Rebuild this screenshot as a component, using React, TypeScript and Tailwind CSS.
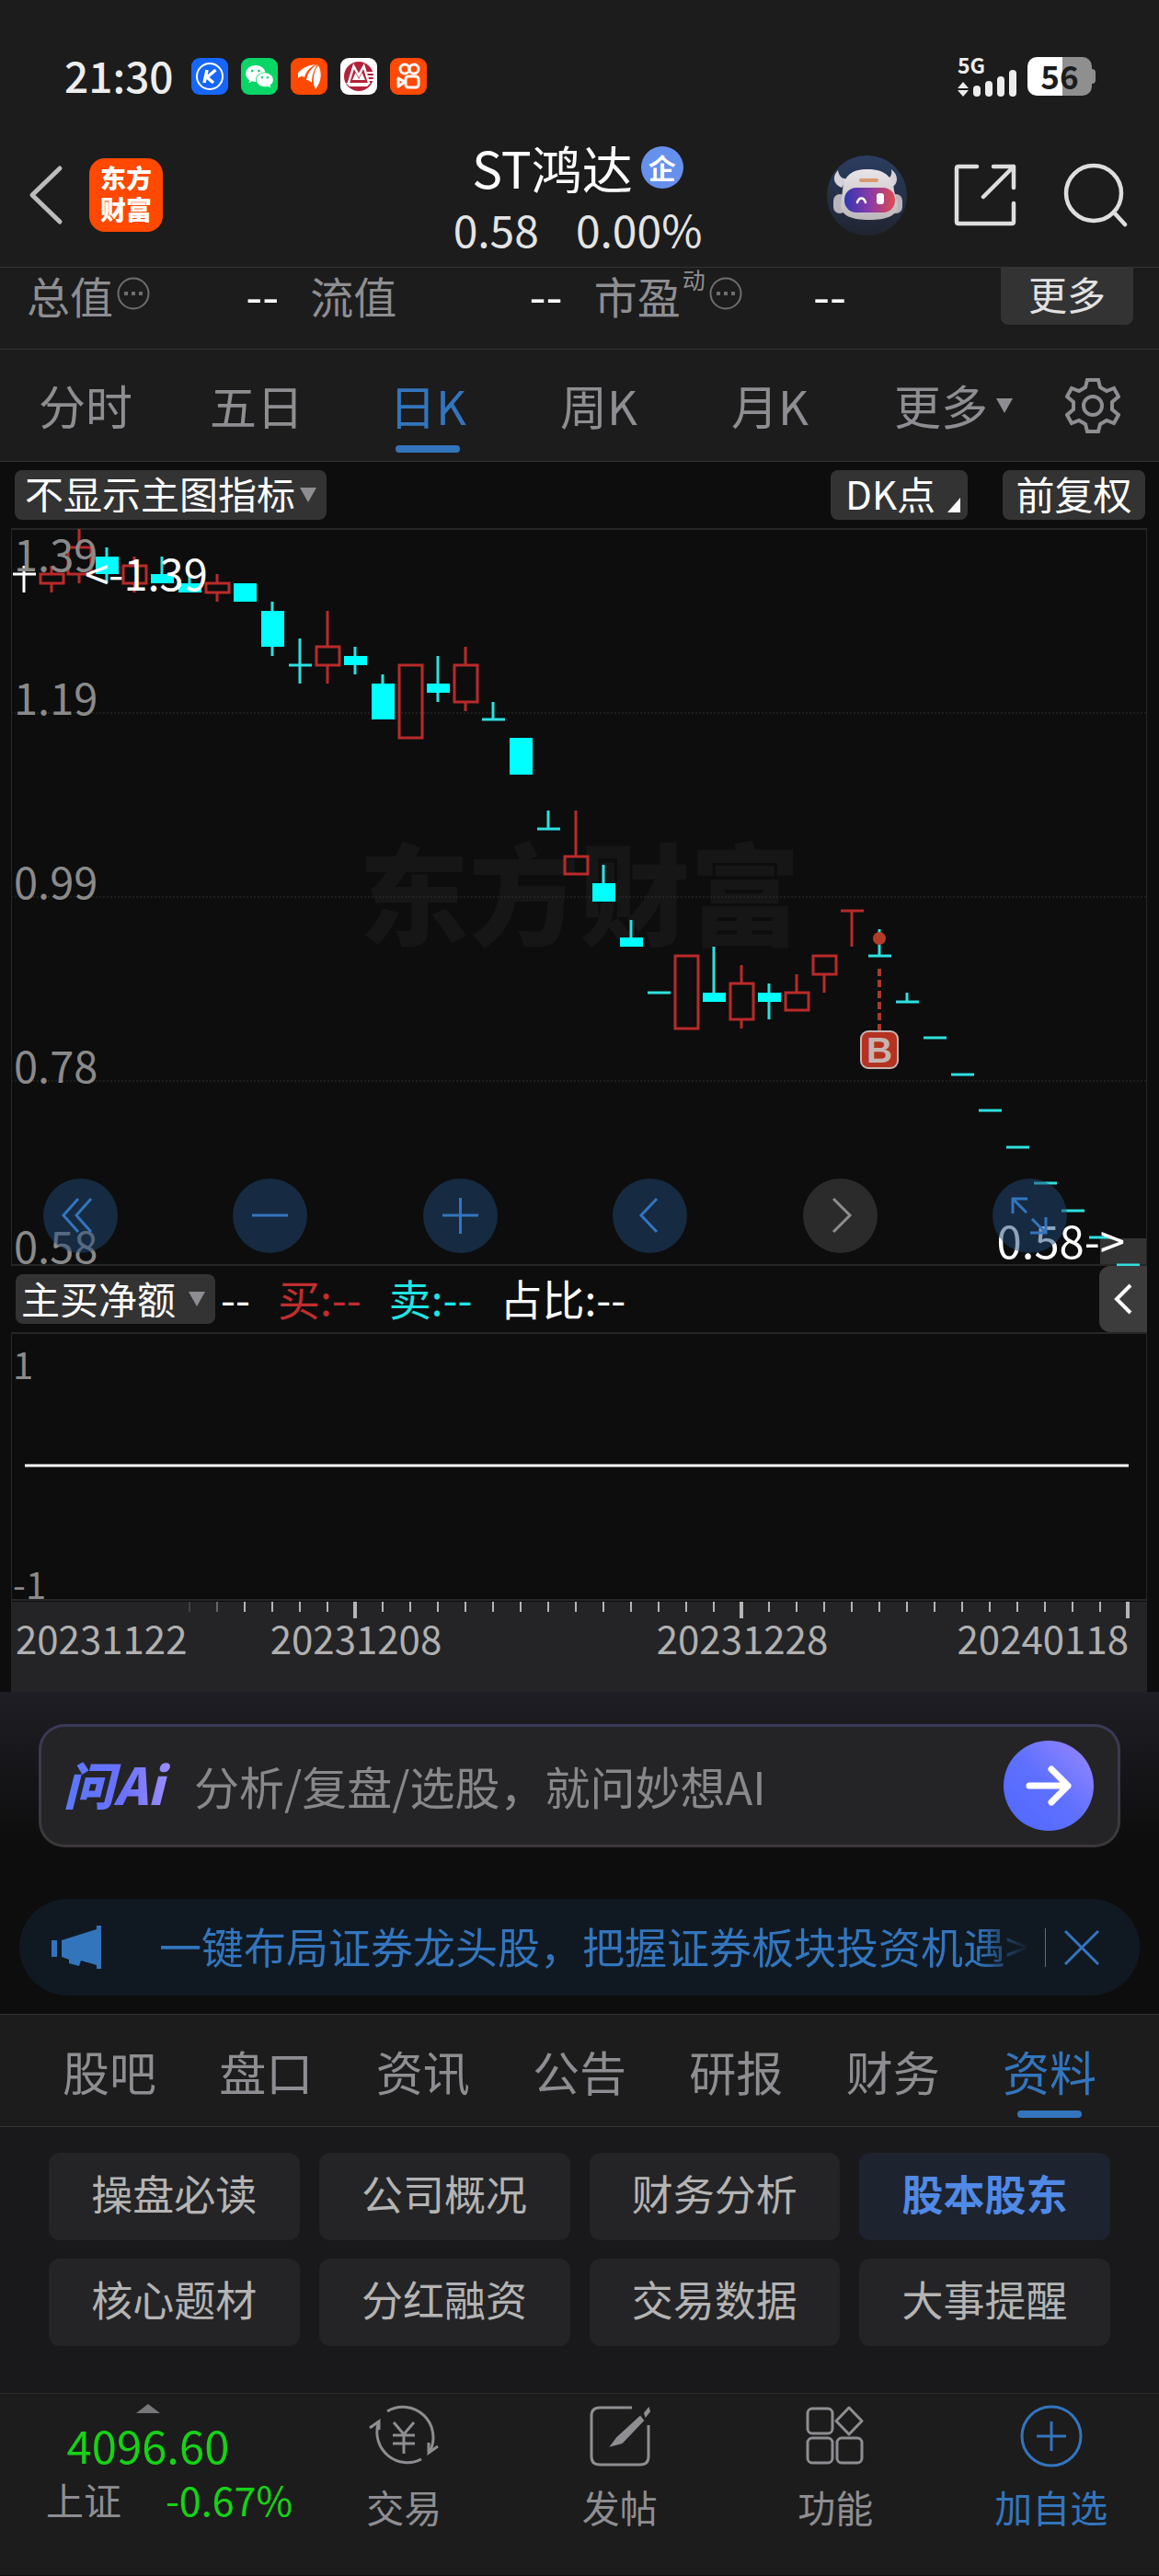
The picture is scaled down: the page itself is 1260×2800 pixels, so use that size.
import React from "react";
import { AiFillWechat } from "react-icons/ai";

type Kind = "up" | "down" | "flat";
/* Each candle: kind, high, body top, body bottom, low; in cents below the 1.39 peak. */
type Candle = [Kind, number, number, number, number];

const candles: Candle[] = [
  ["flat", 4, 5, 5, 7],
  ["up", 4, 5, 6, 7],
  ["up", 0, 2, 5, 6],
  ["down", 2, 3, 5, 6],
  ["up", 3, 4, 6, 7],
  ["down", 3, 5, 6, 6],
  ["down", 5, 6, 7, 7],
  ["up", 5, 6, 7, 8],
  ["down", 6, 6, 8, 8],
  ["down", 8, 9, 13, 14],
  ["down", 12, 15, 15, 17],
  ["up", 9, 13, 15, 17],
  ["down", 13, 14, 15, 16],
  ["down", 16, 17, 21, 21],
  ["up", 15, 15, 23, 23],
  ["down", 14, 17, 18, 19],
  ["up", 13, 15, 19, 20],
  ["down", 19, 21, 21, 21],
  ["down", 23, 23, 27, 27],
  ["down", 31, 33, 33, 33],
  ["up", 31, 36, 38, 38],
  ["down", 37, 39, 41, 41],
  ["down", 43, 45, 46, 46],
  ["down", 51, 51, 51, 51],
  ["up", 47, 47, 55, 55],
  ["down", 46, 51, 52, 52],
  ["up", 48, 50, 54, 55],
  ["down", 50, 51, 52, 54],
  ["up", 49, 51, 53, 53],
  ["up", 47, 47, 49, 51],
  ["up", 42, 42, 42, 46],
  ["down", 44, 47, 47, 47],
  ["down", 51, 52, 52, 52],
  ["down", 56, 56, 56, 56],
  ["down", 60, 60, 60, 60],
  ["down", 64, 64, 64, 64],
  ["down", 68, 68, 68, 68],
  ["down", 72, 72, 72, 72],
  ["down", 75, 75, 75, 75],
  ["down", 78, 78, 78, 78],
  ["down", 81, 81, 81, 81],
];

const PLOT_H = 800;
const yOf = (n: number) => Math.round((n * PLOT_H) / 81);
const xOf = (i: number) => 14 + i * 30;

function CandleMark({ c, i }: { c: Candle; i: number }) {
  const [kind, hi, top, bottom, lo] = c;
  const x = xOf(i);
  const line = kind === "up" ? "#b92a2a" : kind === "down" ? "#2fe0e0" : "#ffffff";
  const flat = top === bottom;
  return (
    <g stroke={line} strokeWidth="3" fill="none">
      {hi < top && <line x1={x} x2={x} y1={yOf(hi)} y2={yOf(top)} />}
      {lo > bottom && <line x1={x} x2={x} y1={yOf(bottom)} y2={yOf(lo)} />}
      {flat && <line x1={x - 12} x2={x + 13} y1={yOf(top)} y2={yOf(top)} />}
      {!flat && kind === "up" && (
        <rect x={x - 12} y={yOf(top)} width="25" height={yOf(bottom) - yOf(top)} />
      )}
      {!flat && kind === "down" && (
        <rect x={x - 12} y={yOf(top)} width="25" height={yOf(bottom) - yOf(top)} fill="#00ffff" stroke="none" />
      )}
    </g>
  );
}

function MainChart() {
  return (
    <svg viewBox="0 0 1235 802" className="block h-auto w-full" role="img" aria-label="日K线图">
      <text x="618" y="445" textAnchor="middle" fontSize="120" fontWeight="900" fill="#161616">东方财富</text>
      <g stroke="#303030" strokeDasharray="2 2">
        <line x1="0" x2="1235" y1="201" y2="201" />
        <line x1="0" x2="1235" y1="401" y2="401" />
        <line x1="0" x2="1235" y1="601" y2="601" />
      </g>
      <rect x="1184" y="772" width="51" height="28" fill="#333333" />
      <path d="M0 1H1235M0 801H1235" stroke="#262626" strokeWidth="2" />
      <path d="M0.5 0V802M1234.5 0V802" stroke="#262626" />
      <g transform="translate(0 1)">
        {candles.map((c, i) => (
          <CandleMark key={i} c={c} i={i} />
        ))}
      </g>
      <g fontSize="47" fill="#8a8a8a">
        <text x="3" y="47">1.39</text>
        <text x="3" y="203">1.19</text>
        <text x="3" y="403">0.99</text>
        <text x="3" y="603">0.78</text>
        <text x="3" y="799">0.58</text>
      </g>
      <text x="80" y="68" fontSize="47" fill="#ffffff">&lt;-1.39</text>
      <text x="1211" y="794" fontSize="49" fill="#ffffff" textAnchor="end">0.58-&gt;</text>
      <circle cx="944" cy="446" r="7" fill="#b43a28" />
      <line x1="944" x2="944" y1="479" y2="546" stroke="#a63c2c" strokeWidth="4" strokeDasharray="8 4" />
      <rect x="924" y="547" width="40" height="40" rx="8" fill="#b53220" stroke="#c6b4b1" strokeWidth="2" />
      <text x="944" y="581" textAnchor="middle" fontSize="39" fontWeight="700" fill="#c6b4b1" fontFamily="Liberation Sans, sans-serif">B</text>
    </svg>
  );
}

const controls: { label: string; d: string; off?: boolean }[] = [
  { label: "最早", d: "M38 22L22 40L38 58M52 22L36 40L52 58" },
  { label: "缩小", d: "M21 40H60" },
  { label: "放大", d: "M21 40H60M40.500 21V60" },
  { label: "向左", d: "M48 22L31 40L48 58" },
  { label: "向右", d: "M33 22L51 40L33 58", off: true },
  { label: "全屏", d: "M22 38V22H38M22 22L37 37M43 44L58 59M41 59H58V42" },
];

function Controls() {
  return (
    <div className="absolute bottom-[14px] left-[35px] right-[87px] flex justify-between">
      {controls.map((c) => (
        <button
          key={c.label}
          aria-label={c.label}
          className={
            c.off
              ? "h-[81px] w-[81px] rounded-full bg-[#2b2b2b] text-[#8e8e92]"
              : "h-[81px] w-[81px] rounded-full bg-[#1f4775]/50 text-[#3375bd]"
          }
        >
          <svg viewBox="0 0 81 81" className="h-full w-full" fill="none" stroke="currentColor" strokeWidth="3">
            <path d={c.d} />
          </svg>
        </button>
      ))}
    </div>
  );
}

function SubChart() {
  return (
    <svg viewBox="0 0 1235 293" className="block h-auto w-full" role="img" aria-label="主买净额图">
      <path d="M0 1H1235M0 291H1235" stroke="#262626" strokeWidth="2" />
      <path d="M0.5 0V293M1234.5 0V293" stroke="#262626" />
      <g fontSize="40" fill="#8a8a8a">
        <text x="2" y="51">1</text>
        <text x="2" y="290">-1</text>
      </g>
      <line x1="15" x2="1215" y1="145" y2="145" stroke="#ffffff" strokeWidth="3" />
    </svg>
  );
}

function TimeAxis() {
  const ticks = Array.from({ length: 35 }, (_, k) => k + 6);
  return (
    <svg viewBox="0 0 1235 98" className="block h-auto w-full bg-[#242426]" role="img" aria-label="日期轴">
      {ticks.map((i) => {
        const major = i === 12 || i === 26 || i === 40;
        return (
          <line
            key={i}
            x1={xOf(i)}
            x2={xOf(i)}
            y1="0"
            y2={major ? 18 : 11}
            stroke="#b5b5b5"
            strokeWidth={major ? 4 : 2}
            opacity={i === 6 ? 0.2 : i === 7 ? 0.45 : 1}
          />
        );
      })}
      <g fontSize="42" fill="#b0b0b0">
        <text x="5" y="57">20231122</text>
        <text x="375" y="57" textAnchor="middle">20231208</text>
        <text x="795" y="57" textAnchor="middle">20231228</text>
        <text x="1215" y="57" textAnchor="end">20240118</text>
      </g>
    </svg>
  );
}

function StatusBar() {
  return (
    <div className="flex h-[148px] items-center justify-between pl-[70px] pr-[69px] pt-[18px]">
      <div className="flex items-center">
        <span className="w-[138px] pb-1 text-[46px] font-medium leading-none text-[#ededed]">21:30</span>
        <div className="flex gap-[14px]">
          <svg viewBox="0 0 40 40" className="h-10 w-10">
            <rect width="40" height="40" rx="9" fill="#1766fb" />
            <circle cx="20" cy="20" r="14" fill="none" stroke="#fff" strokeWidth="2" />
            <path d="M17 13L14 27M26.500 13L17 21L24 27" fill="none" stroke="#fff" strokeWidth="3.500" />
          </svg>
          <span className="flex h-10 w-10 items-center justify-center rounded-[9px] bg-[#09d667] text-[34px] text-white">
            <AiFillWechat />
          </span>
          <svg viewBox="0 0 40 40" className="h-10 w-10">
            <rect width="40" height="40" rx="9" fill="#ff4800" />
            <path d="M8 16C14 10 19 8 27 7C20 11 17 15 15 21C12 19 10 20 8 22Z" fill="#fff" />
            <path d="M17 24C18 17 22 11 29 7C25 14 23 19 23 27C21 25 19 24 17 24Z" fill="#fff" />
            <path d="M25 29C24 20 26 13 30 8C34 15 34 25 27 34Z" fill="#fff" />
          </svg>
          <svg viewBox="0 0 40 40" className="h-10 w-10">
            <rect width="40" height="40" rx="9" fill="#fff" />
            <circle cx="20" cy="20" r="16" fill="#b3213a" />
            <path d="M9 27L14.500 9L20 19L25.500 9L31 27" fill="none" stroke="#fff" strokeWidth="2.500" />
            <path d="M13 24L16.500 16L20 23L23.500 16L27 24Z" fill="#fff" />
            <path d="M6 27H33L29 31H10Z" fill="#fff" />
            <path d="M29 16H38M30 20H38M31 24H38" stroke="#fff" strokeWidth="2" />
          </svg>
          <svg viewBox="0 0 40 40" className="h-10 w-10">
            <rect width="40" height="40" rx="9" fill="#ff4906" />
            <g fill="none" stroke="#fff" strokeWidth="3">
              <circle cx="16" cy="12" r="5" />
              <circle cx="26" cy="12" r="5" />
              <rect x="17" y="20" width="14" height="12" rx="3" />
              <path d="M16 26L9 22V31Z" strokeLinejoin="round" />
            </g>
          </svg>
        </div>
      </div>
      <div className="flex items-center gap-3">
        <div className="flex h-[44px] items-end gap-[5px]">
          <div className="relative h-4 w-3">
            <span className="absolute bottom-[18px] left-0 text-[23px] font-bold leading-[34px] text-[#ededed]">5G</span>
            <svg viewBox="0 0 12 16" className="h-4 w-3" fill="#ededed">
              <path d="M6 0L12 7H0ZM6 16L12 9H0Z" />
            </svg>
          </div>
          <span className="h-3 w-2 rounded-sm bg-[#ededed]" />
          <span className="h-[17px] w-2 rounded-sm bg-[#ededed]" />
          <span className="h-[22px] w-2 rounded-sm bg-[#ededed]" />
          <span className="h-[29px] w-2 rounded-sm bg-[#ededed]" />
        </div>
        <div className="flex items-center">
          <span className="flex h-[42px] w-[70px] items-center justify-center rounded-[10px] bg-[linear-gradient(90deg,#ffffff_55%,#8f8f8f_55%)] pb-1 text-[35px] font-bold leading-none text-[#1c1c1c]">
            56
          </span>
          <span className="h-4 w-1 rounded-r bg-[#8f8f8f]" />
        </div>
      </div>
    </div>
  );
}

function Robot() {
  return (
    <svg viewBox="0 0 87 87" className="h-[87px] w-[87px]">
      <defs>
        <linearGradient id="halo" x1="0" y1="0" x2="0" y2="1">
          <stop offset="0" stopColor="#2b3d60" />
          <stop offset="1" stopColor="#202430" />
        </linearGradient>
        <linearGradient id="visor" x1="0" y1="0" x2="1" y2="0">
          <stop offset="0" stopColor="#2f37b0" />
          <stop offset="0.5" stopColor="#8a3aa8" />
          <stop offset="1" stopColor="#e04a50" />
        </linearGradient>
        <linearGradient id="helmet" x1="0" y1="0" x2="0" y2="1">
          <stop offset="0" stopColor="#e8e4e8" />
          <stop offset="1" stopColor="#bdb6ba" />
        </linearGradient>
      </defs>
      <circle cx="43.500" cy="43.500" r="43.500" fill="url(#halo)" />
      <path d="M12 16C6 22 6 31 16 35L22 25C16 26 13 22 12 16ZM70 15C78 21 78 31 70 35L63 25C69 26 71 21 70 15Z" fill="#d5d1d8" />
      <rect x="7" y="42" width="14" height="21" rx="7" fill="#b9b4bc" />
      <rect x="68" y="42" width="14" height="21" rx="7" fill="#b9b4bc" />
      <path d="M17 38C18 22 27 15 44 15C61 15 72 22 73 38L77 54C77 66 64 70 46 70C28 70 15 66 15 54Z" fill="url(#helmet)" />
      <rect x="35" y="25" width="21" height="4" rx="2" fill="#d99a6c" />
      <rect x="19" y="35" width="55" height="27" rx="13" fill="url(#visor)" />
      <path d="M33 51C35 45 40 45 42 51" fill="none" stroke="#fff" strokeWidth="2.500" strokeLinecap="round" />
      <rect x="54" y="41" width="8" height="12" rx="3" fill="#fff" />
    </svg>
  );
}

function Header() {
  return (
    <header className="grid h-[142px] grid-cols-[1fr_auto_1fr] items-center pb-2 pl-[30px] pr-[34px]">
      <div className="flex items-center gap-[27px] pb-1.5">
        <button aria-label="返回" className="text-[#bcbcbc]">
          <svg viewBox="0 0 40 68" className="h-[68px] w-10" fill="none" stroke="currentColor" strokeWidth="5" strokeLinecap="round" strokeLinejoin="round">
            <path d="M35 5L5 34L35 63" />
          </svg>
        </button>
        <div className="flex h-20 w-20 flex-col items-center justify-center rounded-[17px] bg-[#ff4800] pb-1 text-[28px] font-black leading-[34px] text-white">
          <span>东方</span>
          <span>财富</span>
        </div>
      </div>
      <div className="text-center text-[48px] leading-[67px] text-[#e4e4e4]">
        <h1 className="flex items-center justify-center gap-[9px] text-[55px] text-white">
          ST鸿达
          <span className="flex h-[46px] w-[46px] items-center justify-center rounded-full bg-[#6590ec] pb-0.5 text-[30px] font-bold leading-none">企</span>
        </h1>
        <p className="flex justify-center gap-10">
          <span>0.58</span>
          <span>0.00%</span>
        </p>
      </div>
      <div className="flex items-center justify-end gap-[51px] pb-1.5 text-[#dedede]">
        <button aria-label="智能助手">
          <Robot />
        </button>
        <button aria-label="分享">
          <svg viewBox="0 0 68 68" className="h-[68px] w-[68px]" fill="none" stroke="currentColor" strokeWidth="4.500" strokeLinecap="round" strokeLinejoin="round">
            <path d="M25 3H5Q3 3 3 5V63Q3 65 5 65H63Q65 65 65 63V43M43 3H65V26M65 3L32 36" />
          </svg>
        </button>
        <button aria-label="搜索">
          <svg viewBox="0 0 70 70" className="h-[70px] w-[70px]" fill="none" stroke="currentColor" strokeWidth="4.500" strokeLinecap="round">
            <circle cx="33" cy="33" r="30" />
            <path d="M56 55L67 67" />
          </svg>
        </button>
      </div>
    </header>
  );
}

function Info() {
  return (
    <svg viewBox="0 0 36 36" className="mb-0.5 h-9 w-9" fill="none" stroke="#6e6e70" strokeWidth="2">
      <circle cx="18" cy="18" r="16.500" />
      <path d="M8 18H12M16 18H20M24 18H28" strokeWidth="4" />
    </svg>
  );
}

function Stats() {
  const stats = [
    { name: "总值", info: true },
    { name: "流值" },
    { name: "市盈", sup: "动", info: true },
  ];
  return (
    <section className="flex h-[90px] items-start justify-between border-y border-[#333333] pl-[29px] pr-7">
      <dl className="grid grow grid-cols-3 gap-[34px] pr-[168px] text-[47px] leading-none">
        {stats.map((s) => (
          <div key={s.name} className="flex h-[58px] items-center justify-between">
            <dt className="flex h-full items-center gap-1 text-[#8e8e92]">
              {s.name}
              {s.sup && <span className="-ml-0.5 self-start text-[25px] leading-none">{s.sup}</span>}
              {s.info && <Info />}
            </dt>
            <dd className="text-[52px] text-white">--</dd>
          </div>
        ))}
      </dl>
      <button className="flex h-[62px] w-36 items-center justify-center rounded-b-lg bg-[#333333] pb-1.5 text-[42px] leading-none text-[#e2e2e2]">更多</button>
    </section>
  );
}

function PeriodTabs() {
  const base = "relative flex h-full items-center justify-center text-[51px] leading-none";
  return (
    <nav className="flex h-[122px] items-center border-b border-[#333333] pr-[42px] text-[#8e8e92]">
      <div className="grid h-full grow grid-cols-6 pr-[42px]">
        <button className={base}>分时</button>
        <button className={base}>五日</button>
        <button className={base + " text-[#3375bd]"}>
          日K
          <span className="absolute bottom-[9px] h-2 w-[70px] rounded-full bg-[#3375bd]" />
        </button>
        <button className={base}>周K</button>
        <button className={base}>月K</button>
        <button className={base}>
          更多
          <svg viewBox="0 0 18 16" className="absolute right-[15px] h-4 w-[18px]" fill="currentColor">
            <path d="M0 0H18L9 16Z" />
          </svg>
        </button>
      </div>
      <button aria-label="设置">
        <svg viewBox="0 0 60 60" className="h-[60px] w-[60px]" fill="none" stroke="currentColor" strokeWidth="4">
          <path d="M24 2H36L38 10L45 14L53 11L58 20L51 26V34L58 40L53 49L45 46L38 50L36 58H24L22 50L15 46L7 49L2 40L9 34V26L2 20L7 11L15 14L22 10Z" />
          <circle cx="30" cy="30" r="10" />
        </svg>
      </button>
    </nav>
  );
}

function Toolbar() {
  return (
    <div className="flex h-[72px] items-center justify-between pl-4 pr-[15px] text-[42px] leading-none text-white">
      <label className="relative flex items-center">
        <select aria-label="主图指标" className="h-[54px] appearance-none rounded-lg bg-[#333333] pb-1 pl-[11px] pr-[33px]">
          <option>不显示主图指标</option>
        </select>
        <svg viewBox="0 0 18 16" className="pointer-events-none absolute right-[11px] h-4 w-[18px]" fill="#8e8e92">
          <path d="M0 0H18L9 16Z" />
        </svg>
      </label>
      <div className="flex gap-[38px]">
        <button className="flex h-[54px] w-[149px] items-center justify-between rounded-lg bg-[#333333] pb-1 pl-4 pr-2">
          DK点
          <svg viewBox="0 0 14 16" className="mb-1 h-4 w-3.5 self-end" fill="#fff">
            <path d="M14 0V16H0Z" />
          </svg>
        </button>
        <button className="h-[54px] w-[155px] rounded-lg bg-[#333333] pb-1">前复权</button>
      </div>
    </div>
  );
}

function FlowRow() {
  return (
    <div className="flex h-[72px] items-center justify-between pl-[5px] text-[42px] leading-none">
      <div className="flex items-center">
        <label className="relative flex items-center">
          <select aria-label="副图指标" className="h-[54px] w-[217px] appearance-none rounded-lg bg-[#333333] pb-0.5 pl-[6px] text-white">
            <option>主买净额</option>
          </select>
          <svg viewBox="0 0 18 16" className="pointer-events-none absolute right-[11px] h-4 w-[18px]" fill="#8e8e92">
            <path d="M0 0H18L9 16Z" />
          </svg>
        </label>
        <div className="flex gap-[30px] pb-1 pl-[6px] text-[46px]">
          <span className="text-white">--</span>
          <span className="text-[#c02e2e]">买:--</span>
          <span className="text-[#20e4e4]">卖:--</span>
          <span className="text-white">占比:--</span>
        </div>
      </div>
      <button aria-label="展开" className="flex h-[72px] w-[52px] items-center justify-center rounded-l-xl bg-[#3c3c3c]">
        <svg viewBox="0 0 20 34" className="h-[34px] w-5" fill="none" stroke="#fff" strokeWidth="4">
          <path d="M18 2L3 17L18 32" />
        </svg>
      </button>
    </div>
  );
}

function AskBar() {
  return (
    <form className="bg-linear-to-b from-[#1f1e25] to-[#0d0d0d] px-[42px] pt-[35px]" onSubmit={(e) => e.preventDefault()}>
      <div className="rounded-[28px] bg-linear-to-b from-[#3b3a58] to-[#3c3839] p-[3px]">
        <div className="flex h-[128px] items-center rounded-[25px] bg-[#242426] pl-[24px] pr-[26px]">
          <label
            htmlFor="ask"
            className="w-[128px] bg-linear-to-r from-[#5878ff] via-[#6a70ff] to-[#a894ff] bg-clip-text pb-1.5 text-[55px] font-black italic leading-[80px] text-transparent"
          >
            问Ai
          </label>
          <input
            id="ask"
            placeholder="分析/复盘/选股，就问妙想AI"
            className="h-[80px] min-w-0 grow bg-transparent pb-0.5 pl-[14px] text-[49px] leading-none text-white outline-none placeholder:text-[#88888a]"
          />
          <button aria-label="发送" className="h-[98px] w-[98px] rounded-full bg-linear-to-tr from-[#4f68ff] via-[#5f70ff] to-[#9a88ff]">
            <svg viewBox="0 0 98 98" className="h-full w-full" fill="none" stroke="#fff" strokeWidth="7" strokeLinecap="round" strokeLinejoin="round">
              <path d="M28 49H70M52 31L70 49L52 67" />
            </svg>
          </button>
        </div>
      </div>
    </form>
  );
}

function Notice() {
  return (
    <div className="px-[21px] pb-5 pt-14">
      <div className="flex h-[105px] items-center rounded-full bg-[#101922] pl-[35px] pr-[44px] text-[#3375bd]">
        <svg viewBox="0 0 54 48" className="h-12 w-[54px] shrink-0" fill="currentColor">
          <path d="M0 16H6V34H0ZM11 16L49 4V0H54V47H49V43L32 38L30 44L19 41V37L11 34Z" />
        </svg>
        <a
          href="#notice"
          className="ml-[63px] min-w-0 grow overflow-hidden whitespace-nowrap bg-linear-to-r from-[#3375bd] from-94% to-[#101922] bg-clip-text pb-1.5 text-[46px] leading-[66px] text-transparent"
        >
          一键布局证券龙头股，把握证券板块投资机遇&gt;
        </a>
        <span className="ml-4 h-[42px] w-px shrink-0 bg-[#3375bd]" />
        <button aria-label="关闭" className="ml-5 shrink-0">
          <svg viewBox="0 0 38 38" className="h-[38px] w-[38px]" fill="none" stroke="currentColor" strokeWidth="3">
            <path d="M1 1L37 37M37 1L1 37" />
          </svg>
        </button>
      </div>
    </div>
  );
}

const sections = ["股吧", "盘口", "资讯", "公告", "研报", "财务", "资料"];
const topics = ["操盘必读", "公司概况", "财务分析", "股本股东", "核心题材", "分红融资", "交易数据", "大事提醒"];

function Sections() {
  return (
    <>
      <nav className="flex h-[123px] justify-between border-y border-[#333333] bg-[#1c1c1c] px-[68px]">
        {sections.map((s) => (
          <button
            key={s}
            className={
              s === "资料"
                ? "relative flex items-center justify-center pt-0.5 text-[51px] leading-none text-[#3375bd]"
                : "relative flex items-center justify-center pt-0.5 text-[51px] leading-none text-[#8e8e92]"
            }
          >
            {s}
            {s === "资料" && <span className="absolute bottom-[9px] h-2 w-[70px] rounded-full bg-[#3375bd]" />}
          </button>
        ))}
      </nav>
      <div className="grid grid-cols-4 gap-x-[21px] gap-y-5 bg-[#19191b] px-[53px] pb-[51px] pt-7">
        {topics.map((t) => (
          <button
            key={t}
            className={
              t === "股本股东"
                ? "h-[95px] rounded-xl bg-[#1d232f] pb-2 text-[45px] font-bold leading-none text-[#5089e6]"
                : "h-[95px] rounded-xl bg-[#242426] pb-2 text-[45px] leading-none text-[#b4b4b4]"
            }
          >
            {t}
          </button>
        ))}
      </div>
    </>
  );
}

function NavItem({ label, active, children }: { label: string; active?: boolean; children: React.ReactNode }) {
  return (
    <button
      className={
        active
          ? "flex flex-1 flex-col items-center text-[41px] leading-none text-[#3375bd]"
          : "flex flex-1 flex-col items-center text-[41px] leading-none text-[#8e8e92]"
      }
    >
      <svg viewBox="0 0 76 70" className="mb-[21px] h-[70px] w-[76px]" fill="none" stroke="currentColor" strokeWidth="3">
        {children}
      </svg>
      {label}
    </button>
  );
}

function BottomNav() {
  return (
    <footer className="flex h-[198px] border-t border-[#2a2a2a] bg-[#1c1c1c] pt-[11px]">
      <button className="flex w-[322px] flex-col items-center leading-none text-[#16d216]">
        <svg viewBox="0 0 26 10" className="h-[10px] w-[26px]" fill="#77777a">
          <path d="M13 0L26 10H0Z" />
        </svg>
        <span className="mt-1 text-[49px] leading-[60px]">4096.60</span>
        <span className="flex items-center gap-12 pl-[46px] text-[43px] leading-[58px]">
          <span className="text-[41px] text-[#8e8e92]">上证</span>
          <span>-0.67%</span>
        </span>
      </button>
      <NavItem label="交易">
        <path d="M20 8A33 33 0 0 1 66 52M57 60A33 33 0 0 1 10 22" />
        <path d="M1 26L11 19V28M75 46L65 53V42" />
        <path d="M27 20L38 33L49 20M38 33V54M26 34H50M26 43H50" />
      </NavItem>
      <NavItem label="发帖">
        <path d="M51 4H16Q7 4 7 13V57Q7 66 16 66H60Q69 66 69 57V23" />
        <path d="M60 14L35 37L29 45L40 42L63 18ZM65 10L69 5L70 8L66 13Z" fill="currentColor" strokeWidth="2" />
      </NavItem>
      <NavItem label="功能">
        <rect x="8" y="5" width="27" height="27" rx="5" />
        <path d="M53 4L67 18.500L53 33L39 18.500Z" strokeLinejoin="round" />
        <rect x="8" y="37" width="27" height="27" rx="5" />
        <rect x="40" y="37" width="27" height="27" rx="5" />
      </NavItem>
      <NavItem label="加自选" active>
        <circle cx="38" cy="35" r="32" />
        <path d="M22 35H54M38 19V51" />
      </NavItem>
    </footer>
  );
}

export default function App() {
  return (
    <main className="flex min-h-screen flex-col bg-[#0d0d0d] font-['Noto_Sans_CJK_SC','Noto_Sans',sans-serif]">
      <div className="bg-[#1c1c1c]">
        <StatusBar />
        <Header />
        <Stats />
        <PeriodTabs />
      </div>
      <Toolbar />
      <div className="pl-3 pr-[13px]">
        <div className="relative">
          <MainChart />
          <Controls />
        </div>
        <FlowRow />
        <SubChart />
        <TimeAxis />
      </div>
      <AskBar />
      <Notice />
      <Sections />
      <BottomNav />
    </main>
  );
}
